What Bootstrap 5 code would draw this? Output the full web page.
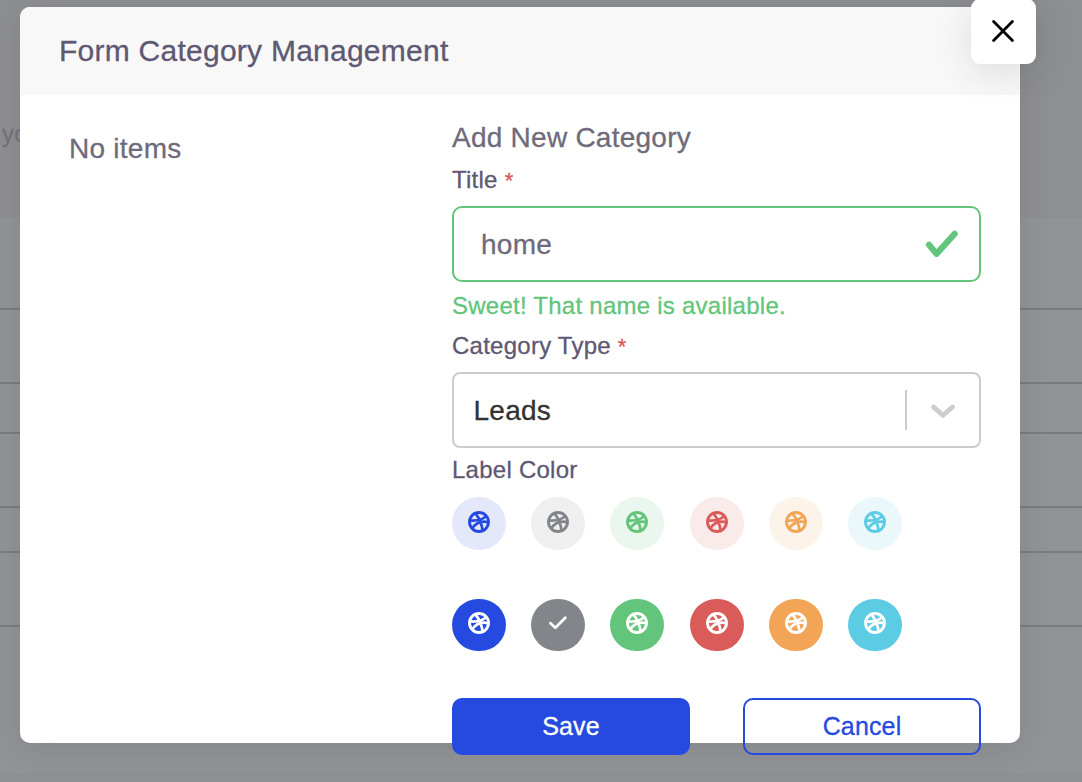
<!DOCTYPE html>
<html lang="en">
<head>
<meta charset="utf-8">
<meta name="viewport" content="width=device-width, initial-scale=1">
<title>Form Category Management</title>
<link href="https://cdn.jsdelivr.net/npm/bootstrap@5.3.0/dist/css/bootstrap.min.css" rel="stylesheet">
<style>
body{font-family:"Liberation Sans",Arial,sans-serif;background:#8e8f93;height:782px;letter-spacing:.25px;color:#6e6b7b;-webkit-text-stroke:.3px currentColor}
.page-top{height:218px;padding-top:118px}
.page-top p{font-size:24px;line-height:32px;padding-left:2px;color:#737479}
.page-panel{height:555px;background:#929397;padding-top:16px}
.page-row{border-bottom:2px solid #7a7b80}
.overlay{z-index:10;padding:7px 0 0 20px}
.dialog-box{width:1000px;height:736px;border-radius:10px;background:#fff;box-shadow:0 5px 32px rgba(34,41,47,.12)}
.dialog-head{height:88px;background:#f8f8f8;border-radius:10px 10px 0 0;padding:0 39px}
.dialog-head h1{font-size:30px;color:#5e5873;letter-spacing:.25px;line-height:36px}
.close-btn{top:-8px;right:-16px;width:65px;height:65px;border-radius:9px;background:#fff;box-shadow:0 8px 36px rgba(34,41,47,.13);border:0}
.close-btn svg{margin:0 1px 2px 0}
.left-pane{width:432px;padding:35px 0 0 49px;font-size:28px;line-height:38px}
.right-pane{width:529px}
.sub-title{font-size:28px;line-height:38px;padding-top:24px}
.field-label{font-size:24px;line-height:30px;color:#5e5873}
.req{color:#e05654;font-size:22px;line-height:1}
.field{height:76px;border-radius:10px}
.field-name{border:2px solid #62c57b;padding:0 20px 0 27px;font-size:28px}
.field-name input{border:0;outline:0;padding:2px 0 0;color:#6e6b7b;width:300px;letter-spacing:.25px;background:transparent}
.field-type{border:2px solid #ccc;border-radius:8px;font-size:28px;color:#333;padding:0 23px 0 19.5px}
.field-type .me-auto,.field-type svg{margin-top:1px}
.sep{width:2px;height:40px;background:#ccc;margin-right:23px}
.ok-text{font-size:24px;line-height:30px;color:#62c57b}
.swatches{gap:25.2px}
.swatch{width:54px;height:53px;border-radius:26.5px;padding-bottom:3px}
.solid .swatch{height:52px;color:#fff;padding-bottom:4px}
.act{width:238px;height:57px;border-radius:10px;font-size:25px;letter-spacing:.15px;line-height:1;padding:0}
.act-save{background:#264adf;color:#fff}
.act-cancel{border:2px solid #264adf;color:#264adf}
.c-blue{color:#264adf;background:#e5e8fb}.c-gray{color:#82868b;background:#efeff0}.c-green{color:#62c57b;background:#eaf7ee}
.c-red{color:#d95c5a;background:#f9ebea}.c-orange{color:#f2a457;background:#fdf4e9}.c-cyan{color:#5ccbe4;background:#eaf8fc}
.s-blue{background:#264adf}.s-gray{background:#82868b}.s-green{background:#62c57b}.s-red{background:#d95c5a}.s-orange{background:#f2a457}.s-cyan{background:#5ccbe4}
</style>
</head>
<body class="m-0 overflow-hidden position-relative">
<svg class="d-none">
  <symbol id="ball" viewBox="0 0 22 22"><g fill="none" stroke="currentColor" stroke-width="2.7"><circle cx="11" cy="11" r="9.5" stroke-width="2.9"/><path d="M7.3 2.2C11.2 7.2 13.9 13 14.6 20M1.6 9.4C8 10 15 8.4 18.8 4.6M4.2 17.9C7.3 12 13.2 9.6 20.6 11.2"/></g></symbol>
</svg>
<div class="page-top"><p class="m-0">yo</p></div>
<div class="page-panel">
  <div class="page-row" style="height:76px"></div>
  <div class="page-row" style="height:74px"></div>
  <div class="page-row" style="height:50px"></div>
  <div class="page-row" style="height:74px"></div>
  <div class="page-row" style="height:45px"></div>
  <div class="page-row" style="height:74px"></div>
</div>
<div class="overlay position-absolute top-0 start-0">
<div class="dialog-box position-relative">
  <header class="dialog-head d-flex align-items-center"><h1 class="m-0 fw-normal">Form Category Management</h1></header>
  <button class="close-btn position-absolute d-flex align-items-center justify-content-center p-0" aria-label="Close"><svg width="22" height="22" viewBox="0 0 22 22" fill="none" stroke="#000" stroke-width="2.8" stroke-linecap="round"><path d="M1.6 1.6l18.8 18.8M20.4 1.6L1.6 20.4"/></svg></button>
  <div class="d-flex">
    <div class="left-pane">No items</div>
    <form class="right-pane">
      <div class="sub-title">Add New Category</div>
      <div class="field-label" style="margin-top:8px">Title <span class="req">*</span></div>
      <div class="field field-name d-flex align-items-center justify-content-between" style="margin-top:11px">
        <input type="text" value="home">
        <svg width="34" height="28" viewBox="0 0 34 28" fill="none" stroke="#62c57b" stroke-width="6.2" stroke-linecap="round" stroke-linejoin="round"><path d="M4 14.8L11.5 23.8 29.6 3.8"/></svg>
      </div>
      <div class="ok-text" style="margin-top:9px">Sweet! That name is available.</div>
      <div class="field-label" style="margin-top:10px">Category Type <span class="req">*</span></div>
      <div class="field field-type d-flex align-items-center" style="margin-top:11px">
        <span class="me-auto">Leads</span><span class="sep"></span>
        <svg width="26" height="16" viewBox="0 0 26 16" fill="none" stroke="#ccc" stroke-width="4.8" stroke-linecap="round" stroke-linejoin="round"><path d="M3.5 4L13 12.4 22.5 4"/></svg>
      </div>
      <div class="field-label" style="margin-top:7px">Label Color</div>
      <div class="swatches d-flex" style="margin-top:12px">
        <span class="swatch c-blue d-flex align-items-center justify-content-center"><svg width="22" height="22"><use href="#ball"/></svg></span>
        <span class="swatch c-gray d-flex align-items-center justify-content-center"><svg width="22" height="22"><use href="#ball"/></svg></span>
        <span class="swatch c-green d-flex align-items-center justify-content-center"><svg width="22" height="22"><use href="#ball"/></svg></span>
        <span class="swatch c-red d-flex align-items-center justify-content-center"><svg width="22" height="22"><use href="#ball"/></svg></span>
        <span class="swatch c-orange d-flex align-items-center justify-content-center"><svg width="22" height="22"><use href="#ball"/></svg></span>
        <span class="swatch c-cyan d-flex align-items-center justify-content-center"><svg width="22" height="22"><use href="#ball"/></svg></span>
      </div>
      <div class="swatches solid d-flex" style="margin-top:49px">
        <span class="swatch s-blue d-flex align-items-center justify-content-center"><svg width="22" height="22"><use href="#ball"/></svg></span>
        <span class="swatch s-gray d-flex align-items-center justify-content-center"><svg width="18" height="14" viewBox="0 0 18 14" fill="none" stroke="#fff" stroke-width="2.7" stroke-linecap="round" stroke-linejoin="round"><path d="M1.5 7.2L6.3 11.8 16.3 1.8"/></svg></span>
        <span class="swatch s-green d-flex align-items-center justify-content-center"><svg width="22" height="22"><use href="#ball"/></svg></span>
        <span class="swatch s-red d-flex align-items-center justify-content-center"><svg width="22" height="22"><use href="#ball"/></svg></span>
        <span class="swatch s-orange d-flex align-items-center justify-content-center"><svg width="22" height="22"><use href="#ball"/></svg></span>
        <span class="swatch s-cyan d-flex align-items-center justify-content-center"><svg width="22" height="22"><use href="#ball"/></svg></span>
      </div>
      <div class="d-flex justify-content-between" style="margin-top:47px">
        <button type="button" class="btn act act-save">Save</button>
        <button type="button" class="btn act act-cancel">Cancel</button>
      </div>
    </form>
  </div>
</div>
</div>
<script src="https://cdn.jsdelivr.net/npm/bootstrap@5.3.0/dist/js/bootstrap.bundle.min.js"></script>
</body>
</html>
